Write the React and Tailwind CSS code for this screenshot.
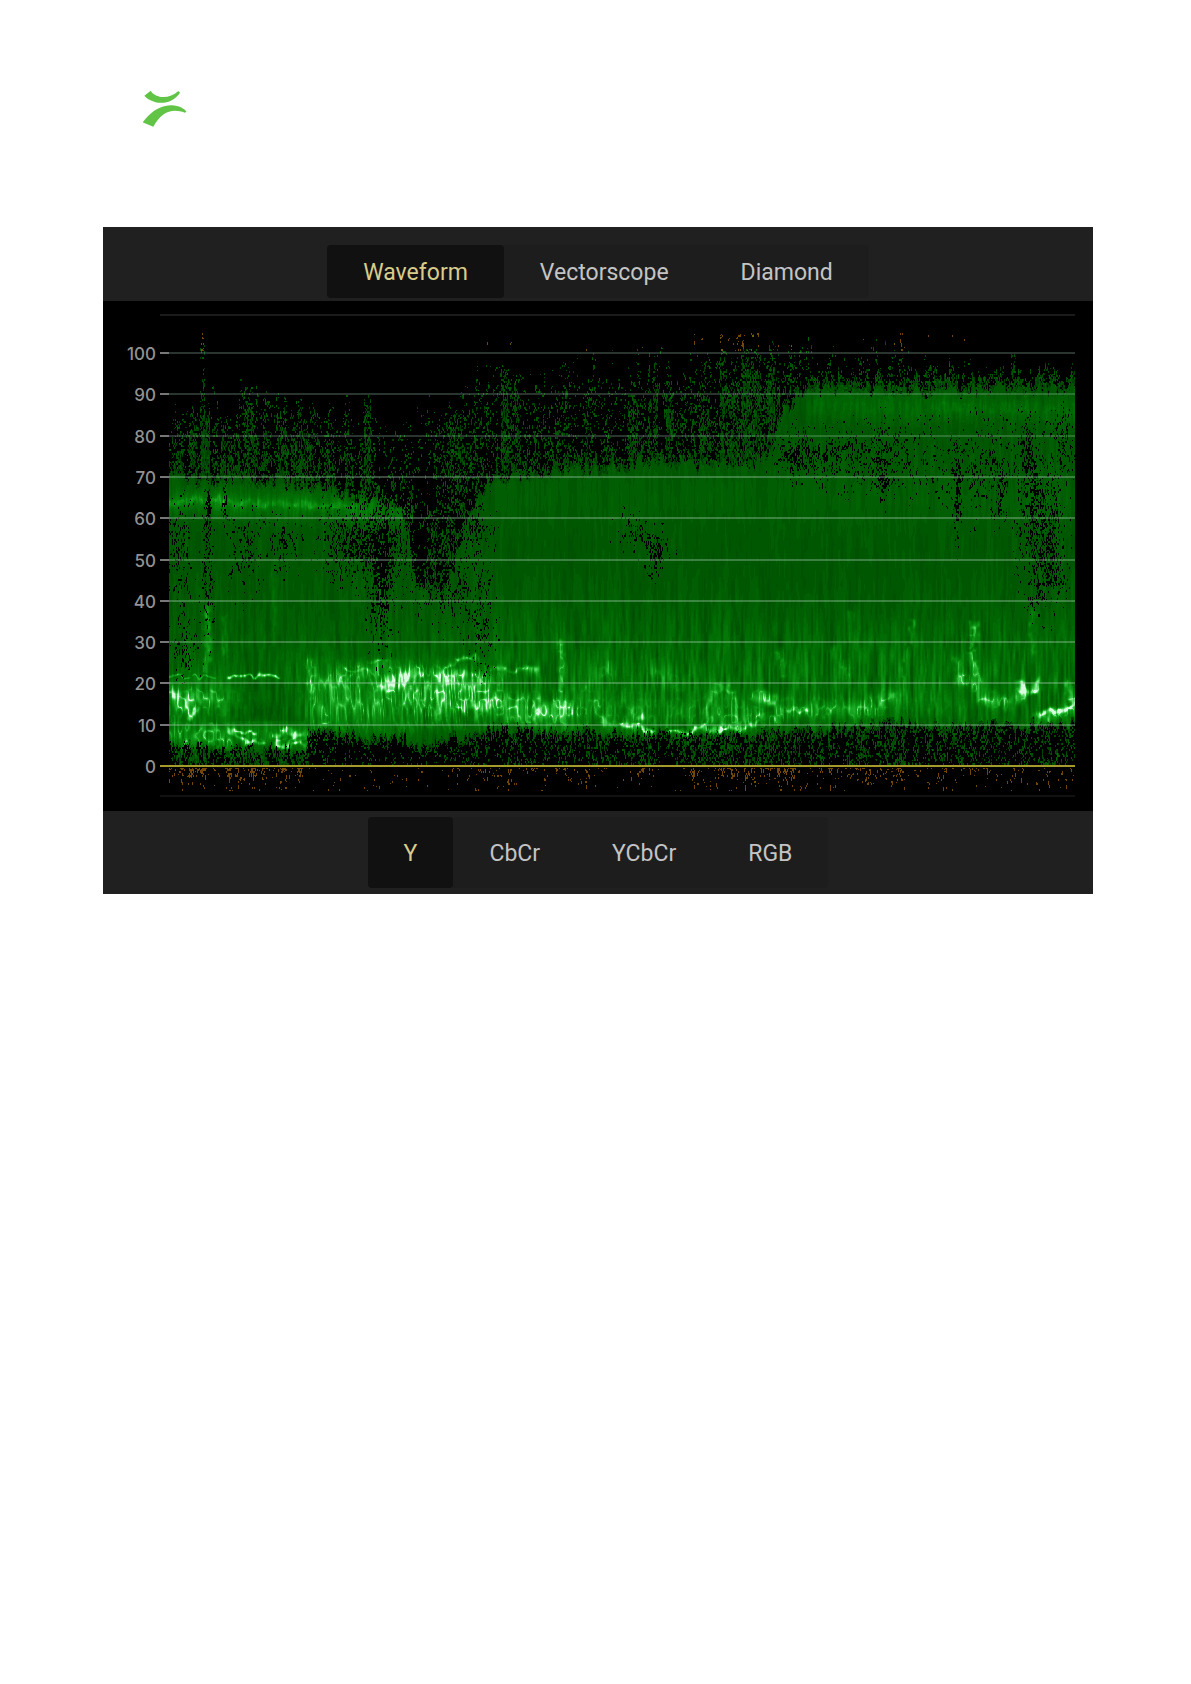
import { useMemo, useState } from "react";

const LEFT = 66;
const WIDTH = 906;
const TOP = 18;
const ROWS = 478;
const ZERO = 465;
const UNIT = 4.13;

const clamp = (n, a = 0, b = 1) => Math.min(b, Math.max(a, n));

function hash(x, y, seed = 0) {
  let h = Math.imul(x | 0, 374761393) ^ Math.imul(y | 0, 668265263) ^ Math.imul(seed + 11, 1274126177);
  h = Math.imul(h ^ (h >>> 13), 1274126177);
  h = Math.imul(h ^ (h >>> 15), 2246822519);
  return ((h ^ (h >>> 16)) >>> 0) / 4294967296;
}

function noise(x, y, seed = 0) {
  const xi = Math.floor(x);
  const yi = Math.floor(y);
  let fx = x - xi;
  let fy = y - yi;
  fx = fx * fx * (3 - 2 * fx);
  fy = fy * fy * (3 - 2 * fy);
  const a = hash(xi, yi, seed);
  const b = hash(xi + 1, yi, seed);
  const c = hash(xi, yi + 1, seed);
  const d = hash(xi + 1, yi + 1, seed);
  return a + (b - a) * fx + (c - a) * fy + (a - b - c + d) * fx * fy;
}

function along(points, x) {
  if (x <= points[0][0]) return points[0][1];
  for (let i = 1; i < points.length; i++) {
    if (x <= points[i][0]) {
      const [x0, v0] = points[i - 1];
      const [x1, v1] = points[i];
      return v0 + ((v1 - v0) * (x - x0)) / (x1 - x0);
    }
  }
  return points[points.length - 1][1];
}

/* Envelopes: [column, level] */
const SOLID_TOP = [[0, 69.5], [110, 68.5], [160, 66.5], [200, 64], [228, 62], [238, 56], [250, 42], [275, 42], [290, 52], [306, 64], [318, 68.5], [345, 70], [400, 71], [470, 73.5], [530, 72.5], [590, 73], [602, 76], [612, 85], [628, 89], [650, 90.5], [800, 91], [906, 91.5]];
const SPARSE_TOP = [[0, 86], [60, 90], [80, 92], [110, 89], [150, 86], [200, 88], [225, 82], [250, 84], [285, 88], [310, 94], [400, 96], [520, 98], [600, 102], [640, 101], [740, 100], [760, 96], [906, 97]];
const SPARSE_AMOUNT = [[0, 0.5], [140, 0.5], [200, 0.45], [225, 0.38], [245, 0.36], [300, 0.42], [400, 0.4], [520, 0.42], [560, 0.58], [602, 0.62], [625, 0.34], [740, 0.28], [750, 0.15], [906, 0.2]];
const SOLID_BOTTOM = [[0, 7], [30, 5], [80, 4.5], [137, 4.5], [139, 9], [180, 8], [220, 7], [232, 8], [250, 5], [262, 7], [300, 8], [330, 9.5], [420, 8.5], [540, 8], [620, 9], [720, 10.5], [906, 10.5]];
const BOTTOM_AMOUNT = [[0, 0.6], [136, 0.65], [139, 0.24], [220, 0.2], [300, 0.36], [420, 0.46], [560, 0.6], [680, 0.52], [800, 0.46], [906, 0.48]];

/* Columns that reach above the envelope: [column, top level, half width, density] */
const SPIKES = [[33, 102, 2, 0.42], [36, 86, 4, 0.85], [79, 92, 4, 0.55], [62, 83, 8, 0.5], [54, 84, 2, 0.7], [133, 84, 8, 0.6], [128, 82, 6, 0.65], [198, 90, 3, 0.6], [276, 83, 12, 0.5], [287, 86, 7, 0.55], [297, 86, 5, 0.45], [335, 97, 3, 0.6], [346, 95, 5, 0.5], [367, 90, 2, 0.5], [463, 91, 5, 0.55], [486, 100, 2, 0.6], [500, 95, 3, 0.66], [536, 95, 3, 0.5], [554, 101, 3, 0.54], [565, 99, 3, 0.5], [576, 101, 4, 0.66], [585, 101, 4, 0.62], [602, 99, 3, 0.75], [759, 97, 3, 0.7], [767, 97, 3, 0.55], [782, 99, 2, 0.65], [821, 95, 3, 0.65], [837, 95, 2, 0.5], [844, 100, 2, 0.6], [878, 97, 6, 0.55], [886, 97, 2, 0.55]];

/* Thin patches: [column, level, rx, rv, strength] */
const HOLES = [[39, 62, 3, 6, 0.62], [55, 63, 2, 5, 0.62], [38, 46, 5, 14, 0.4], [10, 52, 12, 12, 0.34], [75, 52, 14, 9, 0.34], [115, 54, 14, 6, 0.34], [180, 54, 26, 8, 0.46], [212, 45, 12, 14, 0.5], [222, 54, 26, 9, 0.32], [250, 50, 7, 12, 0.3], [268, 66, 16, 6, 0.3], [305, 58, 16, 8, 0.3], [285, 42, 22, 8, 0.32], [315, 34, 10, 12, 0.28], [487, 52, 12, 5, 0.45], [462, 57, 16, 4, 0.32], [625, 75, 18, 5, 0.34], [660, 75, 40, 6, 0.26], [720, 75, 40, 8, 0.27], [714, 68, 4, 5, 0.4], [788, 65, 3, 9, 0.44], [832, 66, 4, 7, 0.4], [862, 62, 12, 14, 0.36], [882, 60, 13, 16, 0.34], [858, 78, 8, 7, 0.36], [810, 72, 38, 10, 0.27], [895, 80, 10, 8, 0.33], [875, 46, 18, 8, 0.27], [15, 27, 12, 7, 0.28]];

/* Bright strands: [points, radius, gain, grain] */
const STRANDS = [
  [[[0, 64.5], [60, 64], [130, 63.3], [190, 62.6], [232, 62]], 14, 0.13, 0],
  [[[0, 64.3], [50, 64.4], [90, 63.4], [140, 63.2], [185, 62.7]], 5, 0.28, 0.4],
  [[[0, 21.8], [18, 21.8]], 1.4, 0.36, 0.3],
  [[[24, 21.7], [46, 21.7]], 1.4, 0.3, 0.3],
  [[[58, 22], [108, 21.7]], 1.8, 0.62, 0.4],
  [[[0, 18], [12, 15], [24, 17], [48, 16]], 8, 0.5, 0.8],
  [[[14, 16], [22, 12], [27, 14]], 4, 0.45, 0.8],
  [[[0, 16], [60, 16]], 22, 0.18, 0.4],
  [[[0, 9], [20, 6.5], [42, 8], [60, 6]], 12, 0.34, 0.8],
  [[[60, 8], [135, 7]], 13, 0.22, 0.5],
  [[[58, 8.8], [70, 6.5], [94, 5.5]], 3, 0.6, 0.6],
  [[[58, 8.3], [86, 8]], 2.4, 0.6, 0.6],
  [[[106, 7], [116, 9], [124, 7.6], [135, 8]], 4, 0.68, 0.6],
  [[[106, 6], [113, 5], [128, 5.5], [135, 5.3]], 3, 0.56, 0.6],
  [[[140, 25], [141, 20], [150, 14], [156, 11]], 5, 0.36, 0.8],
  [[[142, 16], [230, 17]], 34, 0.13, 0.3],
  [[[155, 20], [190, 23], [218, 24]], 9, 0.28, 0.8],
  [[[178, 23.5], [200, 23]], 2.4, 0.5, 0.6],
  [[[200, 25.5], [220, 25.5]], 2.4, 0.35, 0.7],
  [[[218, 20], [230, 20.5], [245, 22.5]], 9, 0.62, 0.8],
  [[[238, 22], [253, 22.3]], 4, 0.6, 0.5],
  [[[270, 22], [276, 21]], 8, 0.66, 0.7],
  [[[278, 24], [288, 26], [307, 26.4]], 3, 0.44, 0.8],
  [[[222, 18], [270, 18], [315, 18]], 20, 0.33, 0.75],
  [[[285, 22], [310, 22], [315, 18]], 4, 0.45, 0.8],
  [[[292, 14.5], [315, 15], [328, 16]], 6, 0.56, 0.7],
  [[[325, 14], [350, 14], [400, 13]], 14, 0.36, 0.7],
  [[[358, 13], [372, 12.5], [388, 15]], 10, 0.42, 0.8],
  [[[322, 24], [345, 23], [362, 23.5]], 3, 0.3, 0.8],
  [[[360, 23.5], [364, 23]], 4, 0.55, 0.5],
  [[[391, 30], [393, 17], [401, 13]], 3, 0.3, 0.7],
  [[[400, 14], [470, 13], [580, 12]], 18, 0.17, 0.7],
  [[[425, 16], [435, 11], [446, 9.8], [470, 10]], 4, 0.3, 0.8],
  [[[452, 9.8], [470, 9.8], [483, 8.2]], 2.8, 0.62, 0.5],
  [[[470, 12], [474, 12.5]], 4, 0.55, 0.6],
  [[[500, 8.6], [520, 8.1], [535, 9.8]], 2.4, 0.62, 0.4],
  [[[535, 9.2], [552, 9], [570, 9], [588, 11]], 3, 0.52, 0.5],
  [[[530, 9], [541, 16], [551, 19.5], [562, 18], [569, 10]], 3.5, 0.26, 0.6],
  [[[543, 12], [556, 11], [565, 15]], 8, 0.24, 0.8],
  [[[588, 16.5], [601, 16]], 6, 0.58, 0.7],
  [[[580, 11], [588, 13], [607, 11]], 5, 0.34, 0.8],
  [[[616, 13.4], [640, 13.8]], 2.6, 0.5, 0.6],
  [[[610, 13.5], [665, 14], [700, 14], [720, 16.5]], 9, 0.3, 0.8],
  [[[720, 16], [790, 14]], 12, 0.1, 0.6],
  [[[788, 26], [792, 21], [804, 20]], 5, 0.36, 0.8],
  [[[801, 29], [802, 34], [806, 34], [806, 31]], 2.5, 0.34, 0.4],
  [[[740, 30], [743, 35]], 3, 0.2, 0.5],
  [[[732, 17], [738, 28]], 3, 0.18, 0.5],
  [[[802, 27], [812, 16.5], [838, 15.5], [850, 17]], 5, 0.36, 0.8],
  [[[850, 20], [854, 18], [866, 18.5], [868, 20]], 3.6, 0.62, 0.5],
  [[[871, 12.5], [884, 13.7], [895, 13.5], [905, 15.5]], 3.2, 0.68, 0.4],
  [[[871, 11.7], [886, 12], [905, 14.5]], 6, 0.36, 0.8],
  [[[899, 20], [905, 15]], 3.5, 0.4, 0.5],
  [[[650, 87], [780, 87], [906, 86]], 14, 0.09, 0.3],
  [[[760, 87], [820, 87], [895, 86]], 5, 0.09, 0.9],
  [[[38, 38], [39, 29], [36, 23]], 3.5, 0.26, 0.4],
  [[[54, 36], [55, 27]], 3, 0.15, 0.4],
  [[[104, 50], [104, 30]], 3, 0.08, 0.2],
  [[[211, 52], [211, 35]], 2, 0.1, 0.2],
  [[[480, 24], [500, 21], [510, 20]], 12, 0.12, 0.8],
  [[[415, 19], [440, 24], [446, 20]], 5, 0.15, 0.8],
  [[[610, 27], [614, 22]], 5, 0.16, 0.8],
  [[[666, 28], [678, 22]], 6, 0.14, 0.8],
  [[[681, 37], [680, 31]], 2.5, 0.14, 0.4],
  [[[863, 38], [864, 28]], 3, 0.14, 0.5],
];

const TONES = [
  [0, 0, 40, 3],
  [0.2, 0, 62, 4],
  [0.3, 0, 84, 2],
  [0.45, 2, 118, 5],
  [0.6, 14, 154, 22],
  [0.75, 52, 196, 64],
  [0.88, 125, 230, 138],
  [1, 218, 252, 222],
];
const LEVELS = 36;

function tone(i) {
  for (let k = 1; k < TONES.length; k++) {
    if (i <= TONES[k][0]) {
      const a = TONES[k - 1];
      const b = TONES[k];
      const t = (i - a[0]) / (b[0] - a[0]);
      const mix = (n) => Math.round(a[n] + (b[n] - a[n]) * t);
      return `rgb(${mix(1)},${mix(2)},${mix(3)})`;
    }
  }
  return "rgb(218,252,222)";
}

function strandField() {
  const field = new Float32Array(WIDTH * ROWS);
  const row = (v) => ZERO - v * UNIT - TOP;
  for (const [points, radius, gain, grain] of STRANDS) {
    for (let s = 1; s < points.length; s++) {
      const ax = points[s - 1][0];
      const ay = row(points[s - 1][1]);
      const bx = points[s][0];
      const by = row(points[s][1]);
      const pad = radius * 2 + 6;
      const len = (bx - ax) ** 2 + (by - ay) ** 2;
      const x1 = Math.min(WIDTH - 1, Math.ceil(Math.max(ax, bx) + pad));
      const y1 = Math.min(ROWS - 1, Math.ceil(Math.max(ay, by) + pad));
      for (let x = Math.max(0, Math.floor(Math.min(ax, bx) - pad)); x <= x1; x++) {
        for (let y = Math.max(0, Math.floor(Math.min(ay, by) - pad)); y <= y1; y++) {
          const wx = x + (noise(x / 5, y / 5, 3) - 0.5) * 4;
          const wy = y + (noise(x / 5, y / 7, 4) - 0.5) * 6;
          const t = clamp(((wx - ax) * (bx - ax) + (wy - ay) * (by - ay)) / len);
          const d2 = (wx - ax - t * (bx - ax)) ** 2 + (wy - ay - t * (by - ay)) ** 2;
          const ridge = Math.exp(-Math.abs(noise(x / 3.5, y / 8, 5) - 0.5) * 7);
          const texture = 1 - grain + grain * (0.2 + ridge * 1.2);
          const g = gain * Math.exp(-d2 / (radius * radius)) * texture;
          const at = x * ROWS + y;
          const old = field[at];
          /* Joints of one strand overlap, so only the stronger part counts fully. */
          field[at] = Math.max(old, g) + Math.min(old, g) * 0.3;
        }
      }
    }
  }
  return field;
}

function buildTrace() {
  const strands = strandField();
  const paths = Array.from({ length: LEVELS }, () => []);
  const warm = [];
  for (let x = 0; x < WIDTH; x++) {
    const solidTop = along(SOLID_TOP, x) + (noise(x / 3, 1, 8) - 0.5) * 4;
    const sparseTop = along(SPARSE_TOP, x) + (noise(x / 4, 2, 18) - 0.5) * 10;
    const amount = along(SPARSE_AMOUNT, x);
    const bottom = along(SOLID_BOTTOM, x) + (noise(x / 2, 4, 9) - 0.5) * 3.5;
    const bottomAmount = along(BOTTOM_AMOUNT, x);
    const column = noise(x / 3, 9, 10);
    let last = -1;
    let start = 0;
    for (let y = 0; y <= ROWS; y++) {
      let level = -1;
      if (y < ROWS) {
        const v = (ZERO - y - TOP) / UNIT;
        let cover = 1.03;
        if (v > solidTop) {
          const t = (v - solidTop) / Math.max(4, sparseTop - solidTop);
          cover = t < 1 ? amount * Math.pow(1 - t, 0.45) * (0.35 + column * 1.15) : 0;
          cover = Math.max(cover, 0.85 - (v - solidTop) * 0.16);
          if (v < 68 && x > 230 && x < 320) cover = Math.max(cover, 0.46 + (60 - v) * 0.012 + (column - 0.5) * 0.2);
        } else if (v < 0) {
          cover = 0;
        } else if (v < bottom) {
          cover = bottomAmount * (0.45 + column * 0.8) * (0.75 + 0.25 * (v / bottom));
          cover = Math.max(cover, 0.85 - (bottom - v) * 0.3);
        }
        if (v > 60) {
          for (const [sx, top, half, density] of SPIKES) {
            if (Math.abs(x - sx) <= half && v < top) cover = Math.max(cover, density * Math.min(1, 0.55 + (top - v) / 24));
          }
        }
        if (v > 20 && v < 90) {
          for (const [hx, hv, rx, rv, strength] of HOLES) {
            const d = ((x - hx) / rx) ** 2 + ((v - hv) / rv) ** 2;
            if (d < 5) cover -= strength * Math.exp(-d) * 1.15;
          }
        }
        const grain = clamp((hash(x, y >> 1, 1) * 0.5 + noise(x / 1.5, y / 4, 2) * 0.5 - 0.5) * 1.35 + 0.5);
        if (cover > 0 && grain < cover) {
          const body = v < solidTop && v > bottom;
          const streak = noise(x / 2.5, y / 45, 6) - 0.5;
          const fine = noise(x / 1.7, y / 14, 7) - 0.5;
          const low = Math.exp(-(((v - 20) / 16) ** 2));
          const reach = x > 320 ? 1 : 0.5;
          let i = body ? 0.31 + streak * 0.045 + fine * 0.03 : 0.12 + hash(x, y >> 1, 12) * 0.17;
          if (body) {
            i += low * reach * (0.11 + streak * 0.15 + fine * 0.13);
            if (x > 325) i += 0.03 * Math.exp(-(((v - 65) / 7) ** 2));
            if (x > 140 && x < 320 && v < 27) {
              const comb = Math.exp(-Math.abs(noise(x / 2.8 + v / 12, y / 22, 14) - 0.5) * 8);
              i += comb * 0.3 * clamp((27 - v) / 8) * clamp((v - 7) / 6);
            }
            if (x > 60 && x < 136 && v < 20 && v > 11) i -= 0.04;
          } else {
            i += 0.1 * clamp(1 - Math.abs(grain - cover * 0.3) * 3);
          }
          i += strands[x * ROWS + y] * (0.85 + fine * 0.5);
          level = Math.round(clamp(i) * (LEVELS - 1));
        }
        if (v < -0.4 && v > -6) {
          const near = x < 137 ? 0.56 : x > 540 && x < 720 ? 0.54 : x > 300 ? 0.3 : 0.08;
          const c = near * Math.exp(v / 2.6) * (0.2 + column * 1.1) + (column > 0.8 && (x < 137 || x > 300) ? 0.08 : 0);
          if (grain < c) warm.push(`M${x} ${y}v1`);
        }
        if (v > 100.5 && v < 105) {
          const c = Math.abs(x - 33) < 2 ? 0.5 : x > 550 && x < 590 ? 0.3 : column > 0.85 && x > 310 ? 0.2 : 0;
          if (grain < c * (1 - (v - 100) / 7)) warm.push(`M${x} ${y}v1`);
        }
      }
      if (level !== last) {
        if (last >= 0) paths[last].push(`M${x} ${start}V${y}`);
        last = level;
        start = y;
      }
    }
  }
  return { paths: paths.map((p) => p.join("")), warm: warm.join("") };
}

function Trace() {
  const { paths, warm } = useMemo(buildTrace, []);
  return (
    <g transform={`translate(${LEFT + 0.5} ${TOP})`} fill="none" strokeWidth="1">
      {paths.map((d, i) => (d ? <path key={i} d={d} stroke={tone(i / (LEVELS - 1))} /> : null))}
      <path d={warm} stroke="#9a5f0a" opacity="0.75" />
    </g>
  );
}

const TICKS = [100, 90, 80, 70, 60, 50, 40, 30, 20, 10, 0];

function WaveformPlot() {
  return (
    <svg viewBox="0 0 990 510" className="block h-auto w-full bg-black" role="img" aria-label="Luma waveform">
      <Trace />
      <path d="M57 14H972" stroke="#1b1b1b" strokeWidth="2" />
      <path d="M57 495H972" stroke="#111" strokeWidth="2" />
      {TICKS.map((t) => {
        const y = Math.round(ZERO - t * UNIT);
        return (
          <g key={t}>
            {t > 0 ? (
              <>
                <path d={`M66 ${y}H972`} stroke="#a8ccb4" strokeOpacity={t > 70 ? "0.26" : "0.36"} strokeWidth="2" />
                <path d={`M57 ${y}H66`} stroke="#777" strokeWidth="2" />
              </>
            ) : (
              <path d={`M57 ${y}H972`} stroke="#a39b2c" strokeWidth="2" />
            )}
            <text x="53" y={y + 7} textAnchor="end" className="fill-[#929292] font-['Inter',sans-serif] text-[17px] font-medium">
              {t}
            </text>
          </g>
        );
      })}
    </svg>
  );
}

function Segmented({ label, options, height }) {
  const [active, setActive] = useState(options[0]);
  return (
    <div role="tablist" aria-label={label} className="flex rounded bg-[#1d1d1d]">
      {options.map((name) => (
        <button
          key={name}
          type="button"
          role="tab"
          aria-selected={active === name}
          onClick={() => setActive(name)}
          className={`${height} rounded-sm px-9 pt-0.5 font-['Roboto',sans-serif] text-[23px] leading-7 ${
            active === name ? "bg-[#111111] text-[#d9cc8b]" : "text-[#c4c4c4]"
          }`}
        >
          {name}
        </button>
      ))}
    </div>
  );
}

function Logo() {
  return (
    <svg viewBox="39 30 132 114" className="h-[38px] w-11" role="img" aria-label="Logo">
      <g fill="#62c446">
        <path d="M43 47 62 32C76 54 116 60 145 33L150 38C128 74 73 79 43 47Z" />
        <path d="M38 127C56 103 86 75 125 76 147 77 162 85 169 95L165 98C126 84 96 94 70 140Z" />
      </g>
    </svg>
  );
}

export default function App() {
  return (
    <div className="min-h-screen bg-white pr-[98px] pl-[103px] font-['Inter',sans-serif]">
      <header className="pt-[90px] pb-[99px] pl-10">
        <Logo />
      </header>
      <main className="bg-[#202020]">
        <div className="flex justify-center pt-[18px] pb-[3px]">
          <Segmented label="Scope" options={["Waveform", "Vectorscope", "Diamond"]} height="h-[53px]" />
        </div>
        <WaveformPlot />
        <div className="flex justify-center py-1.5">
          <Segmented label="Channels" options={["Y", "CbCr", "YCbCr", "RGB"]} height="h-[71px]" />
        </div>
      </main>
    </div>
  );
}
